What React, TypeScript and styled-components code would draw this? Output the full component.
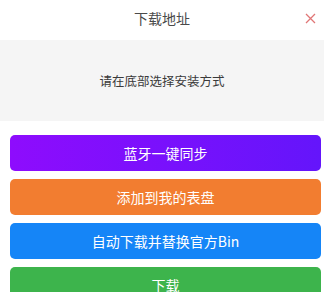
import React from "react";
import styled, { createGlobalStyle } from "styled-components";

const GlobalStyle = createGlobalStyle`
  html, body {
    margin: 0;
    padding: 0;
    background: #ffffff;
    font-family: "Noto Sans CJK SC", "Noto Sans", sans-serif;
  }
`;

const Sheet = styled.div`
  width: 324px;
  height: 292px;
  overflow: hidden;
  background: #ffffff;
`;

const Header = styled.div`
  position: relative;
  height: 40px;
  display: flex;
  align-items: center;
  justify-content: center;
  padding-bottom: 4px;
  box-sizing: border-box;
`;

const Title = styled.div`
  font-size: 14px;
  color: #4a4a4a;
`;

const Close = styled.button`
  position: absolute;
  right: 8px;
  top: 12px;
  width: 12px;
  height: 12px;
  padding: 0;
  border: none;
  background: none;
  display: flex;
  align-items: center;
  justify-content: center;
`;

const Notice = styled.div`
  height: 81px;
  background: #f5f5f5;
  display: flex;
  align-items: center;
  justify-content: center;
  font-size: 12.5px;
  color: #3a3a3a;
`;

const Actions = styled.div`
  display: flex;
  flex-direction: column;
  gap: 8px;
  padding: 14px 3px 0 10px;
`;

const Action = styled.button<{ $bg: string }>`
  height: 36px;
  border: none;
  border-radius: 5px;
  background: ${(p) => p.$bg};
  color: #ffffff;
  font-family: "Noto Sans CJK SC", "Noto Sans", sans-serif;
  font-size: 14px;
  display: flex;
  align-items: center;
  justify-content: center;
  padding: 0;
`;

const actions = [
  { label: "蓝牙一键同步", bg: "linear-gradient(90deg, #8e0cfd, #6415fb)" },
  { label: "添加到我的表盘", bg: "#f27d30" },
  { label: "自动下载并替换官方Bin", bg: "#1585f7" },
  { label: "下载", bg: "#3db44c" },
];

export default function App() {
  return (
    <Sheet>
      <GlobalStyle />
      <Header>
        <Title>下载地址</Title>
        <Close aria-label="close">
          <svg width="11" height="11" viewBox="0 0 11 11">
            <path d="M1 1 L10 10 M10 1 L1 10" stroke="#e07676" strokeWidth="1.3" />
          </svg>
        </Close>
      </Header>
      <Notice>请在底部选择安装方式</Notice>
      <Actions>
        {actions.map((a) => (
          <Action key={a.label} $bg={a.bg}>
            {a.label}
          </Action>
        ))}
      </Actions>
    </Sheet>
  );
}
